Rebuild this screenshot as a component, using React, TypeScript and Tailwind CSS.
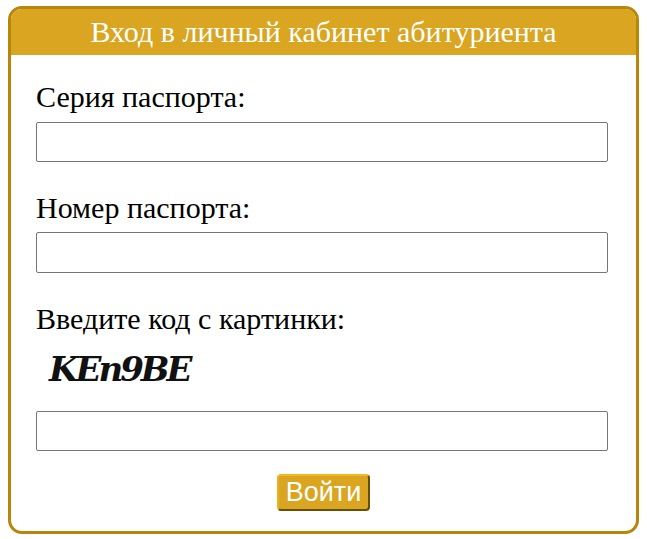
const labelClass = "block text-[30px] leading-[34px] text-black";
const inputClass = "block h-[40px] w-full rounded-[2px] border border-[#767676] bg-white";

export default function App() {
  return (
    <div className="bg-white pl-[8px] pt-[6px] font-['Liberation_Serif',serif]">
      <form className="h-[528px] w-[631px] overflow-hidden rounded-[14px] border-[3px] border-[#b8860b] bg-white">
        <div className="h-[46px] bg-[#daa520] text-center text-[30px] leading-[46px] text-white">
          Вход в личный кабинет абитуриента
        </div>
        <div className="pl-[25px] pr-[28px] pt-[25px]">
          <label className={labelClass}>Серия паспорта:</label>
          <input type="text" className={`${inputClass} mt-[8px]`} />
          <label className={`${labelClass} mt-[29px]`}>Номер паспорта:</label>
          <input type="text" className={`${inputClass} mt-[7px] h-[41px]`} />
          <label className={`${labelClass} mt-[29px]`}>Введите код с картинки:</label>
          <div className="mt-[12px] h-[52px] pl-[13px] font-['DejaVu_Serif',serif] text-[34px] font-bold italic leading-[42px] tracking-[-3px] text-[#111]">
            KEn9BE
          </div>
          <input type="text" className={`${inputClass} mt-[11px]`} />
          <div className="mt-[23px] flex justify-center pl-[3px]">
            <button
              type="button"
              className="h-[37px] w-[93px] rounded-[4px] border-2 border-t-[#f4b81f] border-l-[#eeb01d] border-r-[#6b4e06] border-b-[#6b4e06] bg-[#daa520] font-['Liberation_Sans',sans-serif] text-[27px] leading-none text-white"
            >
              Войти
            </button>
          </div>
        </div>
      </form>
    </div>
  );
}
